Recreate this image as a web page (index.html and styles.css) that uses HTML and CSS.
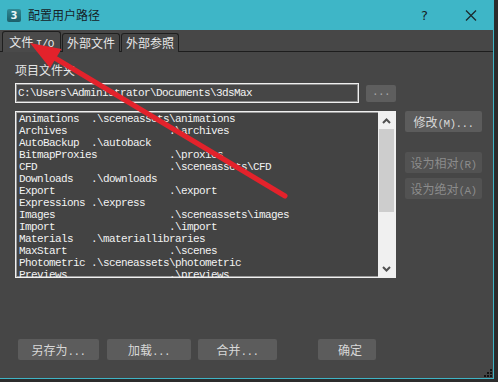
FILE: index.html
```html
<!DOCTYPE html>
<html lang="zh-CN">
<head>
  <meta charset="UTF-8" />
  <title>配置用户路径</title>
  <link rel="stylesheet" href="styles.css">
</head>
<body>
  <div class="window">
    <!-- TITLE BAR -->
    <div class="titlebar">
      <div class="app-icon">3</div>
      <span class="title">配置用户路径</span>
      <span class="help">?</span>
      <svg class="close" width="12" height="11" viewBox="0 0 12 11">
        <path d="M1 0.5 L11 10.5 M11 0.5 L1 10.5" stroke="#1b2a2e" stroke-width="1.3" fill="none"/>
      </svg>
    </div>

    <!-- TABS -->
    <div class="tabs">
      <div class="tab active">文件 <span class="mono">I/O</span></div>
      <div class="tab">外部文件</div>
      <div class="tab">外部参照</div>
    </div>

    <!-- CONTENT -->
    <div class="content">
      <div class="label">项目文件夹</div>

      <div class="path-row">
        <div class="path-input mono">C:\Users\Administrator\Documents\3dsMax</div>
        <div class="btn browse mono">...</div>
      </div>

      <div class="main-row">
        <div class="list">
<pre class="list-items mono">Animations  .\sceneassets\animations
Archives                 .\archives
AutoBackup  .\autoback
BitmapProxies            .\proxies
CFD                      .\sceneassets\CFD
Downloads   .\downloads
Export                   .\export
Expressions .\express
Images                   .\sceneassets\images
Import                   .\import
Materials   .\materiallibraries
MaxStart                 .\scenes
Photometric .\sceneassets\photometric
Previews                 .\previews</pre>
          <div class="scrollbar">
            <div class="sb-arrow">
              <svg width="9" height="6" viewBox="0 0 9 6"><polyline points="1,5 4.5,1.5 8,5" stroke="#505050" stroke-width="2" fill="none"/></svg>
            </div>
            <div class="sb-thumb"></div>
            <div class="sb-track"></div>
            <div class="sb-arrow">
              <svg width="9" height="6" viewBox="0 0 9 6"><polyline points="1,1 4.5,4.5 8,1" stroke="#505050" stroke-width="2" fill="none"/></svg>
            </div>
          </div>
        </div>

        <div class="side">
          <div class="btn side-btn">修改<span class="mono">(M)...</span></div>
          <div class="btn side-btn disabled first-disabled">设为相对<span class="mono">(R)</span></div>
          <div class="btn side-btn disabled">设为绝对<span class="mono">(A)</span></div>
        </div>
      </div>

      <div class="bottom-row">
        <div class="btn b-save">另存为<span class="mono">...</span></div>
        <div class="btn b-load">加载<span class="mono">...</span></div>
        <div class="btn b-merge">合并<span class="mono">...</span></div>
        <div class="btn b-ok">确定</div>
      </div>
    </div>

    <!-- size grip -->
    <svg class="grip" width="8" height="8" viewBox="0 0 8 8">
      <rect x="6" y="0" width="2" height="2" fill="#111"/>
      <rect x="3" y="3" width="2" height="2" fill="#111"/>
      <rect x="6" y="3" width="2" height="2" fill="#111"/>
      <rect x="0" y="6" width="2" height="2" fill="#111"/>
      <rect x="3" y="6" width="2" height="2" fill="#111"/>
      <rect x="6" y="6" width="2" height="2" fill="#111"/>
    </svg>
  </div>

  <!-- red annotation arrow drawn over the screenshot -->
  <svg class="annotation" width="498" height="382" viewBox="0 0 498 382">
    <line x1="54" y1="57.5" x2="285" y2="196" stroke="#e3222b" stroke-width="5" stroke-linecap="round"/>
    <polygon points="30,43 50,68 61.5,49" fill="#e3222b"/>
  </svg>
</body>
</html>
```

FILE: styles.css
```css
/* ---------- PAGE ---------- */
*{margin:0;padding:0;box-sizing:border-box;}
html,body{
  width:498px;height:382px;overflow:hidden;
  background:#2c2c2c;
  font-family:"Noto Sans CJK SC","Microsoft YaHei",sans-serif;
  font-size:12px;
  color:#e4e4e4;
}
.mono{font-family:"Liberation Mono",monospace;font-size:11px;letter-spacing:-0.6px;}

/* ---------- WINDOW ---------- */
.window{
  position:relative;
  width:494px;height:379px;
  background:#464646;
  border-right:1px solid #3fb4c5;
  border-bottom:1px solid #3fb4c5;
  display:flex;flex-direction:column;
}

/* ---------- TITLE BAR ---------- */
.titlebar{
  height:30px;flex:none;
  background:#3eb6c7;
  display:flex;align-items:center;
  padding:0 16px 0 7px;
  color:#162226;
}
.app-icon{
  width:14px;height:13px;margin-right:7px;
  background:linear-gradient(#2f8a96,#1c5f6a);
  border-radius:2px;
  color:#e9f6f7;font:bold 10px/13px "DejaVu Sans",sans-serif;text-align:center;
}
.title{font-size:12px;line-height:14px;}
.help{margin-left:auto;margin-right:37px;font:13px "DejaVu Sans",sans-serif;}
.close{display:block;}

/* ---------- TABS ---------- */
.tabs{
  height:22px;flex:none;
  background:#474747;
  border-bottom:1px solid #1d1d1d;
  display:flex;align-items:flex-end;gap:1px;
  padding-left:2px;
}
.tab{
  width:58px;height:19px;
  border:1px solid #1f1f1f;border-bottom:none;
  border-radius:3px 3px 0 0;
  background:#454545;
  text-align:center;line-height:17px;
  color:#e8e8e8;
  margin-bottom:-1px;
}
.tab.active{width:59px;height:21px;background:#4a4a4a;line-height:19px;}
.tab .mono{font-size:11px;}

/* ---------- CONTENT ---------- */
.content{padding-left:15px;flex:1;}
.label{margin-top:12px;line-height:12px;height:12px;}

.path-row{display:flex;align-items:center;gap:7px;margin-top:7px;}
.path-input{
  width:344px;height:20px;
  border:1px solid #f0f0f0;
  box-shadow:inset 0 0 0 1px #8c8c8c;
  padding-left:2px;line-height:18px;
  color:#f2f2f2;white-space:nowrap;overflow:hidden;
}

.btn{
  background:#5c5c5c;
  border-radius:2px;
  color:#d8d8d8;
  text-align:center;
  white-space:nowrap;
}
.browse{width:30px;height:17px;line-height:15px;color:#a8a8a8;background:#5e5e5e;}

.main-row{display:flex;margin-top:8px;}
.list{
  width:381px;height:167px;
  border:1px solid #f0f0f0;
  box-shadow:inset 0 0 0 1px #9a9a9a;
  display:flex;
  background:#434343;
}
.list-items{
  flex:1;overflow:hidden;
  padding:1px 0 0 3px;
  line-height:12px;
  color:#f2f2f2;
}
.scrollbar{
  width:17px;flex:none;
  background:#f0f0f0;
  display:flex;flex-direction:column;
}
.sb-arrow{height:17px;display:flex;align-items:center;justify-content:center;}
.sb-thumb{height:83px;background:#cdcdcd;margin:0 1px;}
.sb-track{flex:1;}

.side{display:flex;flex-direction:column;margin-left:9px;}
.side-btn{width:77px;height:21px;line-height:21px;}
.disabled{background:#525252;color:#8c8c8c;}
.first-disabled{margin-top:20px;margin-bottom:5px;}

/* ---------- BOTTOM BUTTONS ---------- */
.bottom-row{display:flex;margin-top:61px;margin-left:3px;}
.bottom-row .btn{height:21px;line-height:21px;}
.b-save{width:81px;}
.b-load{width:84px;margin-left:8px;}
.b-merge{width:79px;margin-left:7px;}
.b-ok{width:58px;margin-left:41px;padding-left:20px;text-align:left;}

/* ---------- OVERLAYS ---------- */
.grip{position:absolute;right:1px;bottom:1px;}
.annotation{position:absolute;left:0;top:0;pointer-events:none;}
```
